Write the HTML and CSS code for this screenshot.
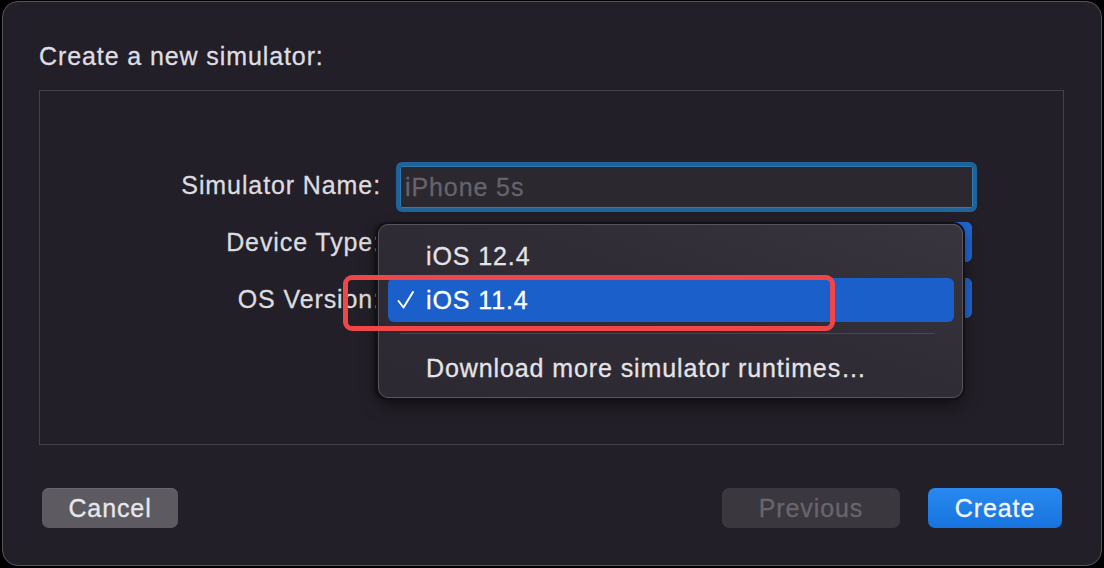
FILE: index.html
```html
<!DOCTYPE html>
<html lang="en">
<head>
<meta charset="utf-8">
<title>Create a new simulator</title>
<link rel="stylesheet" href="styles.css">
</head>
<body>
<div class="window">
  <h1 class="title">Create a new simulator:</h1>
  <div class="panel">
    <div class="row row-name">
      <label class="label label-name">Simulator Name:</label>
      <div class="field"><span class="placeholder">iPhone 5s</span></div>
    </div>
    <div class="row row-device">
      <label class="label">Device Type:</label>
      <div class="popup"><span class="popup-end"></span></div>
    </div>
    <div class="row row-os">
      <label class="label label-os">OS Version:</label>
      <div class="popup"><span class="popup-end"></span></div>
    </div>

    <div class="menu">
      <div class="item"><span class="tick"></span><span>iOS 12.4</span></div>
      <div class="item selected">
        <span class="tick"><svg width="20" height="20" viewBox="0 0 20 20"><path d="M2.5 11 L7.5 17.5 L17 2" fill="none" stroke="#ffffff" stroke-width="2" stroke-linecap="round" stroke-linejoin="round"/></svg></span>
        <span>iOS 11.4</span>
      </div>
      <div class="separator"></div>
      <div class="item"><span class="tick"></span><span>Download more simulator runtimes…</span></div>
    </div>
    <div class="highlight"></div>
  </div>
  <div class="footer">
    <button class="btn btn-cancel">Cancel</button>
    <span class="spacer"></span>
    <button class="btn btn-prev">Previous</button>
    <button class="btn btn-create">Create</button>
  </div>
</div>
</body>
</html>
```
FILE: styles.css
```css
* { box-sizing: border-box; }
html, body {
  margin: 0;
  padding: 0;
  background: #000;
  width: 1104px;
  height: 568px;
  overflow: hidden;
  font-family: "Liberation Sans", Arial, sans-serif;
  font-size: 25px;
  letter-spacing: 0.9px;
  color: #dddce0;
  -webkit-text-stroke: 0.3px currentColor;
}
.window {
  margin: 1px 0 0 2px;
  width: 1100px;
  height: 565px;
  border: 1px solid #57535c;
  border-radius: 16px;
  background: #221f28;
  padding: 40px 37px 0 36px;
  display: flex;
  flex-direction: column;
}
.title {
  margin: 0;
  font-size: 25px;
  font-weight: normal;
  line-height: 28px;
  color: #dedde1;
}
.panel {
  position: relative;
  margin-top: 20px;
  height: 355px;
  border: 1px solid #45414b;
  padding-top: 71px;
}
.row {
  display: flex;
  align-items: center;
}
.row-name { height: 50px; }
.row-device { height: 40px; margin-top: 10px; }
.row-os { height: 41px; margin-top: 15px; }
.label {
  width: 341px;
  flex: none;
  text-align: right;
  line-height: 28px;
  color: #dcdbdf;
  white-space: nowrap;
}
.label-name { padding-bottom: 4px; }
.label-os { padding-top: 3px; }
.field {
  margin-left: 15px;
  width: 581px;
  height: 50px;
  border: 4px solid #1f6399;
  border-radius: 6px;
  background: #2c2830;
  box-shadow: inset 0 0 0 1px #2f7ab5;
  display: flex;
  align-items: center;
  padding-left: 5px;
}
.placeholder {
  color: #66636b;
  line-height: 28px;
}
.popup {
  margin-left: 15px;
  width: 576px;
  height: 40px;
  border-radius: 6px;
  background: #55525a;
  display: flex;
  justify-content: flex-end;
  overflow: hidden;
}
.popup-end {
  width: 22px;
  background: #1f64cf;
}
.menu {
  position: absolute;
  left: 338px;
  top: 133px;
  width: 585px;
  height: 174px;
  border: 1px solid #57545e;
  border-radius: 10px;
  background: linear-gradient(200deg, #38353f 0%, #2f2c35 45%, #2c2932 100%);
  box-shadow: 0 0 0 2px #121116, -3px 0 4px rgba(0, 0, 0, 0.55), 0 8px 18px rgba(0, 0, 0, 0.45);
  padding: 9px 8px 7px 9px;
  z-index: 2;
}
.item {
  height: 44px;
  display: flex;
  align-items: center;
  border-radius: 6px;
  line-height: 28px;
  color: #e4e3e7;
  white-space: nowrap;
}
.item.selected {
  background: #1b5fca;
  color: #ffffff;
}
.tick {
  width: 38px;
  flex: none;
  display: flex;
  align-items: center;
  padding-left: 8px;
}
.tick svg { display: block; }
.separator {
  height: 1px;
  background: #4a4751;
  margin: 11px 19px 12px 12px;
}
.highlight {
  position: absolute;
  left: 303px;
  top: 184px;
  width: 492px;
  height: 56px;
  border: 5px solid #ef4747;
  border-radius: 9px;
  z-index: 3;
}
.footer {
  display: flex;
  align-items: center;
  margin-top: 43px;
  padding: 0 2px 0 3px;
}
.spacer { flex: 1; }
.btn {
  height: 40px;
  border: none;
  border-radius: 7px;
  font-family: "Liberation Sans", Arial, sans-serif;
  font-size: 25px;
  letter-spacing: 0.9px;
  -webkit-text-stroke: 0.3px currentColor;
  padding: 0;
  line-height: 28px;
}
.btn-cancel {
  width: 136px;
  background: #5d5a62;
  color: #e8e7eb;
  box-shadow: inset 0 1px 0 #68656d;
}
.btn-prev {
  width: 178px;
  background: #3a373f;
  color: #68656d;
}
.btn-create {
  width: 134px;
  margin-left: 28px;
  background: linear-gradient(#2989ef, #1773de);
  color: #f2f6fb;
}
```
